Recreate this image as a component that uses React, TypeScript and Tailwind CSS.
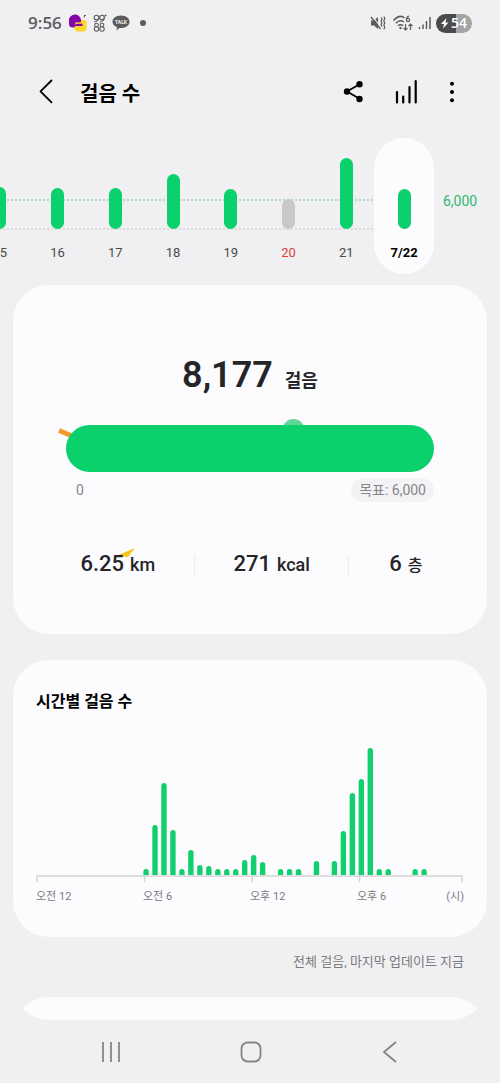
import React, { useState } from 'react';
import clsx from 'clsx';

interface Day {
  label: string;
  height: number;
  holiday?: boolean;
}

const days: Day[] = [
  { label: '15', height: 42 },
  { label: '16', height: 41 },
  { label: '17', height: 41 },
  { label: '18', height: 55 },
  { label: '19', height: 40 },
  { label: '20', height: 30, holiday: true },
  { label: '21', height: 71 },
  { label: '7/22', height: 40 },
];

// [half-hour slot, bar height]
const hourly: [number, number][] = [
  [12, 6], [13, 50], [14, 92], [15, 45], [16, 6], [17, 25], [18, 10], [19, 9],
  [20, 6], [21, 6], [22, 6], [23, 15], [24, 20], [25, 13], [27, 6], [28, 6],
  [29, 6], [31, 14], [33, 14], [34, 44], [35, 82], [36, 96], [37, 127],
  [38, 6], [39, 6], [42, 6], [43, 6],
];

const stats = [
  { value: '6.25', unit: 'km' },
  { value: '271', unit: 'kcal' },
  { value: '6', unit: '층' },
];

const StatusBar = () => (
  <div className="flex h-[46px] shrink-0 items-center justify-between pl-7 pr-7 text-[#5c5c5e]">
    <div className="flex items-center">
      <span className="font-['Open_Sans',sans-serif] text-[17px] font-semibold leading-6">9:56</span>
      <svg width="20" height="20" viewBox="0 0 20 20" className="ml-1.5">
        <path d="M9 7h7q2.500 0 2.500 2.500v6q0 3-3 3H10q-3 0-3.500-3.500z" fill="#fdd52b" />
        <path d="M1 8a6 6 0 0 1 12-1v3.500l1.500.5v2H7.500q-1 0-1 1.500H5Q1 14.500 1 11z" fill="#8105ab" />
        <path d="M8.500 9.200h4.500v1.500H8.500q-1 0-1.500 1.500-.3-3 1.500-3z" fill="#fdd52b" />
        <path d="M16 2.500h2M16.300 2.500v2" stroke="#5c5c5e" strokeWidth="1" />
      </svg>
      <svg width="16" height="20" viewBox="0 0 16 20" className="ml-1" fill="none" stroke="currentColor" strokeWidth="1.100">
        <circle cx="4.500" cy="4.500" r="2.300" />
        <circle cx="10" cy="4.500" r="2.300" />
        <path d="M6.800 4.500q0 3.500-4.500 4.500M12.300 4.500q0 3.500-4.500 4.500M13.500 1.500v2M12.500 2.500h2" />
        <circle cx="4.500" cy="12" r="1.800" />
        <circle cx="10" cy="12" r="1.800" />
        <circle cx="4.500" cy="16" r="2.200" />
        <circle cx="10" cy="16" r="2.200" />
      </svg>
      <svg width="18" height="18" viewBox="0 0 18 18" className="ml-1">
        <path d="M9 1.500c5 0 8.500 2.800 8.500 6.200S14 14 9 14l-1.500-.1L4.300 16.500l.7-3.300C2.300 12.300.5 10.200.5 7.700.5 4.300 4 1.500 9 1.500z" fill="currentColor" />
        <text x="9" y="9.600" textAnchor="middle" fontSize="5" fontWeight="700" fontFamily="Roboto, sans-serif" fill="#f0f0f2">TALK</text>
      </svg>
      <span className="ml-2.5 size-1.5 rounded-full bg-[#5c5c5e]" />
    </div>
    <div className="flex items-center">
      <svg width="16" height="16" viewBox="0 0 16 16" className="mr-1.5" fill="none" stroke="currentColor">
        <path d="M1 5.500h3l4-3.500v12L4 10.500H1z" fill="currentColor" stroke="none" />
        <path d="M2 1l10 12.500" stroke="#f0f0f2" strokeWidth="1.200" />
        <path d="M1 2l9.500 12" strokeWidth="1.300" />
        <path d="M11 2.500l1 1.800-1 1.800 1 1.900-1 1.800 1 1.900M13.800 1.500l1 2-1 2.200 1 2.200-1 2.200 1 2.200-1 2" strokeWidth="1.200" />
      </svg>
      <svg width="22" height="18" viewBox="0 0 22 18" className="mr-1" fill="none" stroke="currentColor" strokeWidth="1.500">
        <path d="M1.500 6.500Q7.500 0 12.500 3.800M3.800 9.200q4.200-4 8.200-1.200M6 11.700q2.500-2 5 0" />
        <circle cx="8.500" cy="14" r="1.200" fill="currentColor" stroke="none" />
        <circle cx="16" cy="6" r="1.600" strokeWidth="1.200" />
        <path d="M17 2.200q-2.500.5-2.600 3.600" strokeWidth="1.200" />
        <path d="M13.500 10v6M11.500 14l2 2 2-2M18.500 16v-6M16.500 12l2-2 2 2" strokeWidth="1.200" />
      </svg>
      <svg width="14" height="14" viewBox="0 0 14 14" className="mr-1" stroke="currentColor" strokeWidth="1.500" strokeLinecap="round">
        <path d="M1.500 11.500v1M5 9v3.500M8.500 5.500v7M12 1.500v11" />
      </svg>
      <div className="flex h-[19px] w-9 items-center rounded-full bg-gradient-to-r from-[#4b4b4d] from-55% to-[#a4a4a6] to-55% pl-1 text-white">
        <svg width="10" height="14" viewBox="0 0 10 14" fill="currentColor">
          <path d="M6.500 2L1 8h3l-1 4.500L8.500 6.500h-3z" />
        </svg>
        <span className="ml-px font-['Open_Sans',sans-serif] text-[14px] font-semibold leading-[18px]">54</span>
      </div>
    </div>
  </div>
);

const Header = () => (
  <header className="flex h-[92px] shrink-0 items-center pl-9 pr-9">
    <button type="button" aria-label="뒤로" className="mr-5">
      <svg width="24" height="28" viewBox="0 0 24 28" fill="none" stroke="#000" strokeWidth="1.800" strokeLinecap="round" strokeLinejoin="round">
        <path d="M15.500 2.500L4.500 13.300l11 11" />
      </svg>
    </button>
    <h1 className="flex-1 pt-1 text-[20px] font-bold leading-7 text-black">걸음 수</h1>
    <button type="button" aria-label="공유" className="mr-7">
      <svg width="24" height="24" viewBox="0 0 24 24" stroke="#000" strokeWidth="1.800">
        <path d="M18 4L5 11.500 18 19" fill="none" />
        <circle cx="17.500" cy="4.200" r="2.300" />
        <circle cx="5" cy="11.500" r="2.300" />
        <circle cx="17.500" cy="19" r="2.300" />
      </svg>
    </button>
    <button type="button" aria-label="차트" className="mr-5">
      <svg width="26" height="26" viewBox="0 0 26 26" stroke="#000" strokeWidth="2.200" strokeLinecap="round">
        <path d="M3 13v10.500M9.200 17.500v6M15.500 8v15.500M21.700 2v21.500" />
      </svg>
    </button>
    <button type="button" aria-label="더보기">
      <svg width="24" height="24" viewBox="0 0 24 24">
        <circle cx="12" cy="3.800" r="2" />
        <circle cx="12" cy="12" r="2" />
        <circle cx="12" cy="20.200" r="2" />
      </svg>
    </button>
  </header>
);

const DayChart = () => {
  const [selected, setSelected] = useState(days.length - 1);

  return (
    <section className="relative flex h-[136px] shrink-0 overflow-hidden">
      <div className="absolute left-0 right-[127px] top-[61px] border-t-2 border-dotted border-[#b4d8c8]" />
      <div className="absolute left-0 right-[127px] top-[90px] border-t-2 border-dotted border-[#dadadd]" />
      <div className="relative -ml-[29px] grid flex-1 grid-cols-8">
        {days.map((day, index) => (
          <button
            key={day.label}
            type="button"
            onClick={() => setSelected(index)}
            className={clsx(
              '-mx-px flex flex-col items-center justify-end rounded-full pb-[11px]',
              index === selected && 'bg-[#fcfcff]'
            )}
          >
            <span
              className={clsx('w-[13px] rounded-full', day.holiday ? 'bg-[#c8c8c9]' : 'bg-[#0ad16c]')}
              style={{ height: day.height }}
            />
            <span
              className={clsx(
                'mt-3.5 text-[13px] leading-5',
                index === selected ? 'font-bold text-black' : day.holiday ? 'text-[#d8403a]' : 'text-[#4a4a4c]'
              )}
            >
              {day.label}
            </span>
          </button>
        ))}
      </div>
      <span className="mt-[53px] w-[67px] pl-2.5 text-[14px] leading-5 text-[#2cb870]">6,000</span>
    </section>
  );
};

const TodayCard = () => (
  <section className="shrink-0 rounded-[36px] bg-[#fcfcff] pb-[59px] pt-[66px] text-[#252528]">
    <p className="text-center leading-[48px]">
      <span className="text-[36px] font-semibold">8,177</span>
      <span className="ml-3 text-[18px] font-bold">걸음</span>
    </p>
    <div className="relative mx-[53px] mt-[19px]">
      {/* confetti peeking out from behind the bar */}
      <svg className="absolute -left-2 -top-2" width="250" height="28" viewBox="0 0 250 28">
        <path d="M1 13.500L18 20.500" stroke="#f39a2f" strokeWidth="5" />
        <circle cx="235.500" cy="13" r="11" fill="#60d596" />
      </svg>
      <div className="relative h-[47px] rounded-full bg-[#0ad16c]" />
    </div>
    <div className="mx-[53px] mt-1.5 flex items-center justify-between pl-2.5 text-[14px] leading-6 text-[#86868a]">
      <span>0</span>
      <span className="rounded-full bg-[#f3f3f5] px-2">목표: 6,000</span>
    </div>
    <div className="relative mt-[53px] grid grid-cols-[4fr_4fr_3fr] items-center pl-7 pr-6">
      <svg className="absolute -top-2 left-[103px]" width="20" height="10" viewBox="0 0 20 10">
        <path d="M0 9L19 1l-7 9z" fill="#f5c518" />
      </svg>
      {stats.map((stat, index) => (
        <div
          key={stat.unit}
          className={clsx('relative flex h-5 items-center justify-center', index > 0 && 'border-l border-[#ececef]')}
        >
          <p className="whitespace-nowrap leading-8">
            <span className="text-[22px] font-medium">{stat.value}</span>
            <span className={clsx('ml-1.5 font-medium', stat.unit === '층' ? 'text-[16px]' : 'text-[18px]')}>
              {stat.unit}
            </span>
          </p>
        </div>
      ))}
    </div>
  </section>
);

const HourlyCard = () => (
  <section className="mt-[26px] shrink-0 rounded-[36px] bg-[#fcfcff] px-[23px] pb-[30px] pt-[30px]">
    <h2 className="text-[16px] font-bold leading-6 text-black">시간별 걸음 수</h2>
    <svg className="mt-7 h-auto w-full" viewBox="0 0 428 141" role="img" aria-label="시간별 걸음 수">
      <path d="M1 140v-6H426v6M108.500 134v6M216 134v6M323.500 134v6" fill="none" stroke="#d3d3d6" strokeWidth="1.500" />
      {hourly.map(([slot, height]) => (
        <path
          key={slot}
          transform={`translate(${slot * 8.97 + 2.4} 133)`}
          d={`M-2.700 0V${3 - height}Q-2.700 ${-height} 0 ${-height}T2.700 ${3 - height}V0z`}
          fill="#12cf6d"
        />
      ))}
    </svg>
    <div className="mt-1 grid grid-cols-4 text-[11px] leading-5 text-[#7b7b7e]">
      <span>오전 12</span>
      <span>오전 6</span>
      <span>오후 12</span>
      <span className="flex justify-between">
        오후 6<span>(시)</span>
      </span>
    </div>
  </section>
);

const NavBar = () => (
  <nav className="flex h-[63px] shrink-0 items-center justify-between px-[98px]">
    <button type="button" aria-label="최근 앱">
      <svg width="26" height="24" viewBox="0 0 26 24" stroke="#858588" strokeWidth="1.800">
        <path d="M5 2v20M13 2v20M21 2v20" />
      </svg>
    </button>
    <button type="button" aria-label="홈">
      <svg width="24" height="24" viewBox="0 0 24 24" fill="none" stroke="#858588" strokeWidth="1.800">
        <rect x="2.500" y="2.500" width="19" height="19" rx="6" />
      </svg>
    </button>
    <button type="button" aria-label="뒤로 가기">
      <svg width="24" height="24" viewBox="0 0 24 24" fill="none" stroke="#858588" strokeWidth="1.800">
        <path d="M18 2L6 12l12 10" />
      </svg>
    </button>
  </nav>
);

const App = () => (
  <div className="flex h-screen flex-col overflow-hidden bg-[#f0f0f2] font-[Roboto,'Noto_Sans_CJK_KR',sans-serif]">
    <StatusBar />
    <Header />
    <DayChart />
    <main className="mx-[13px] mt-[11px] flex min-h-0 flex-1 flex-col overflow-hidden rounded-b-[36px]">
      <TodayCard />
      <HourlyCard />
      <p className="shrink-0 pb-5 pr-[23px] pt-2.5 text-right text-[13px] leading-[30px] text-[#7b7b7e]">
        전체 걸음, 마지막 업데이트 지금
      </p>
      <section className="h-40 shrink-0 rounded-[36px] bg-[#fcfcff]" />
    </main>
    <NavBar />
  </div>
);

export default App;
